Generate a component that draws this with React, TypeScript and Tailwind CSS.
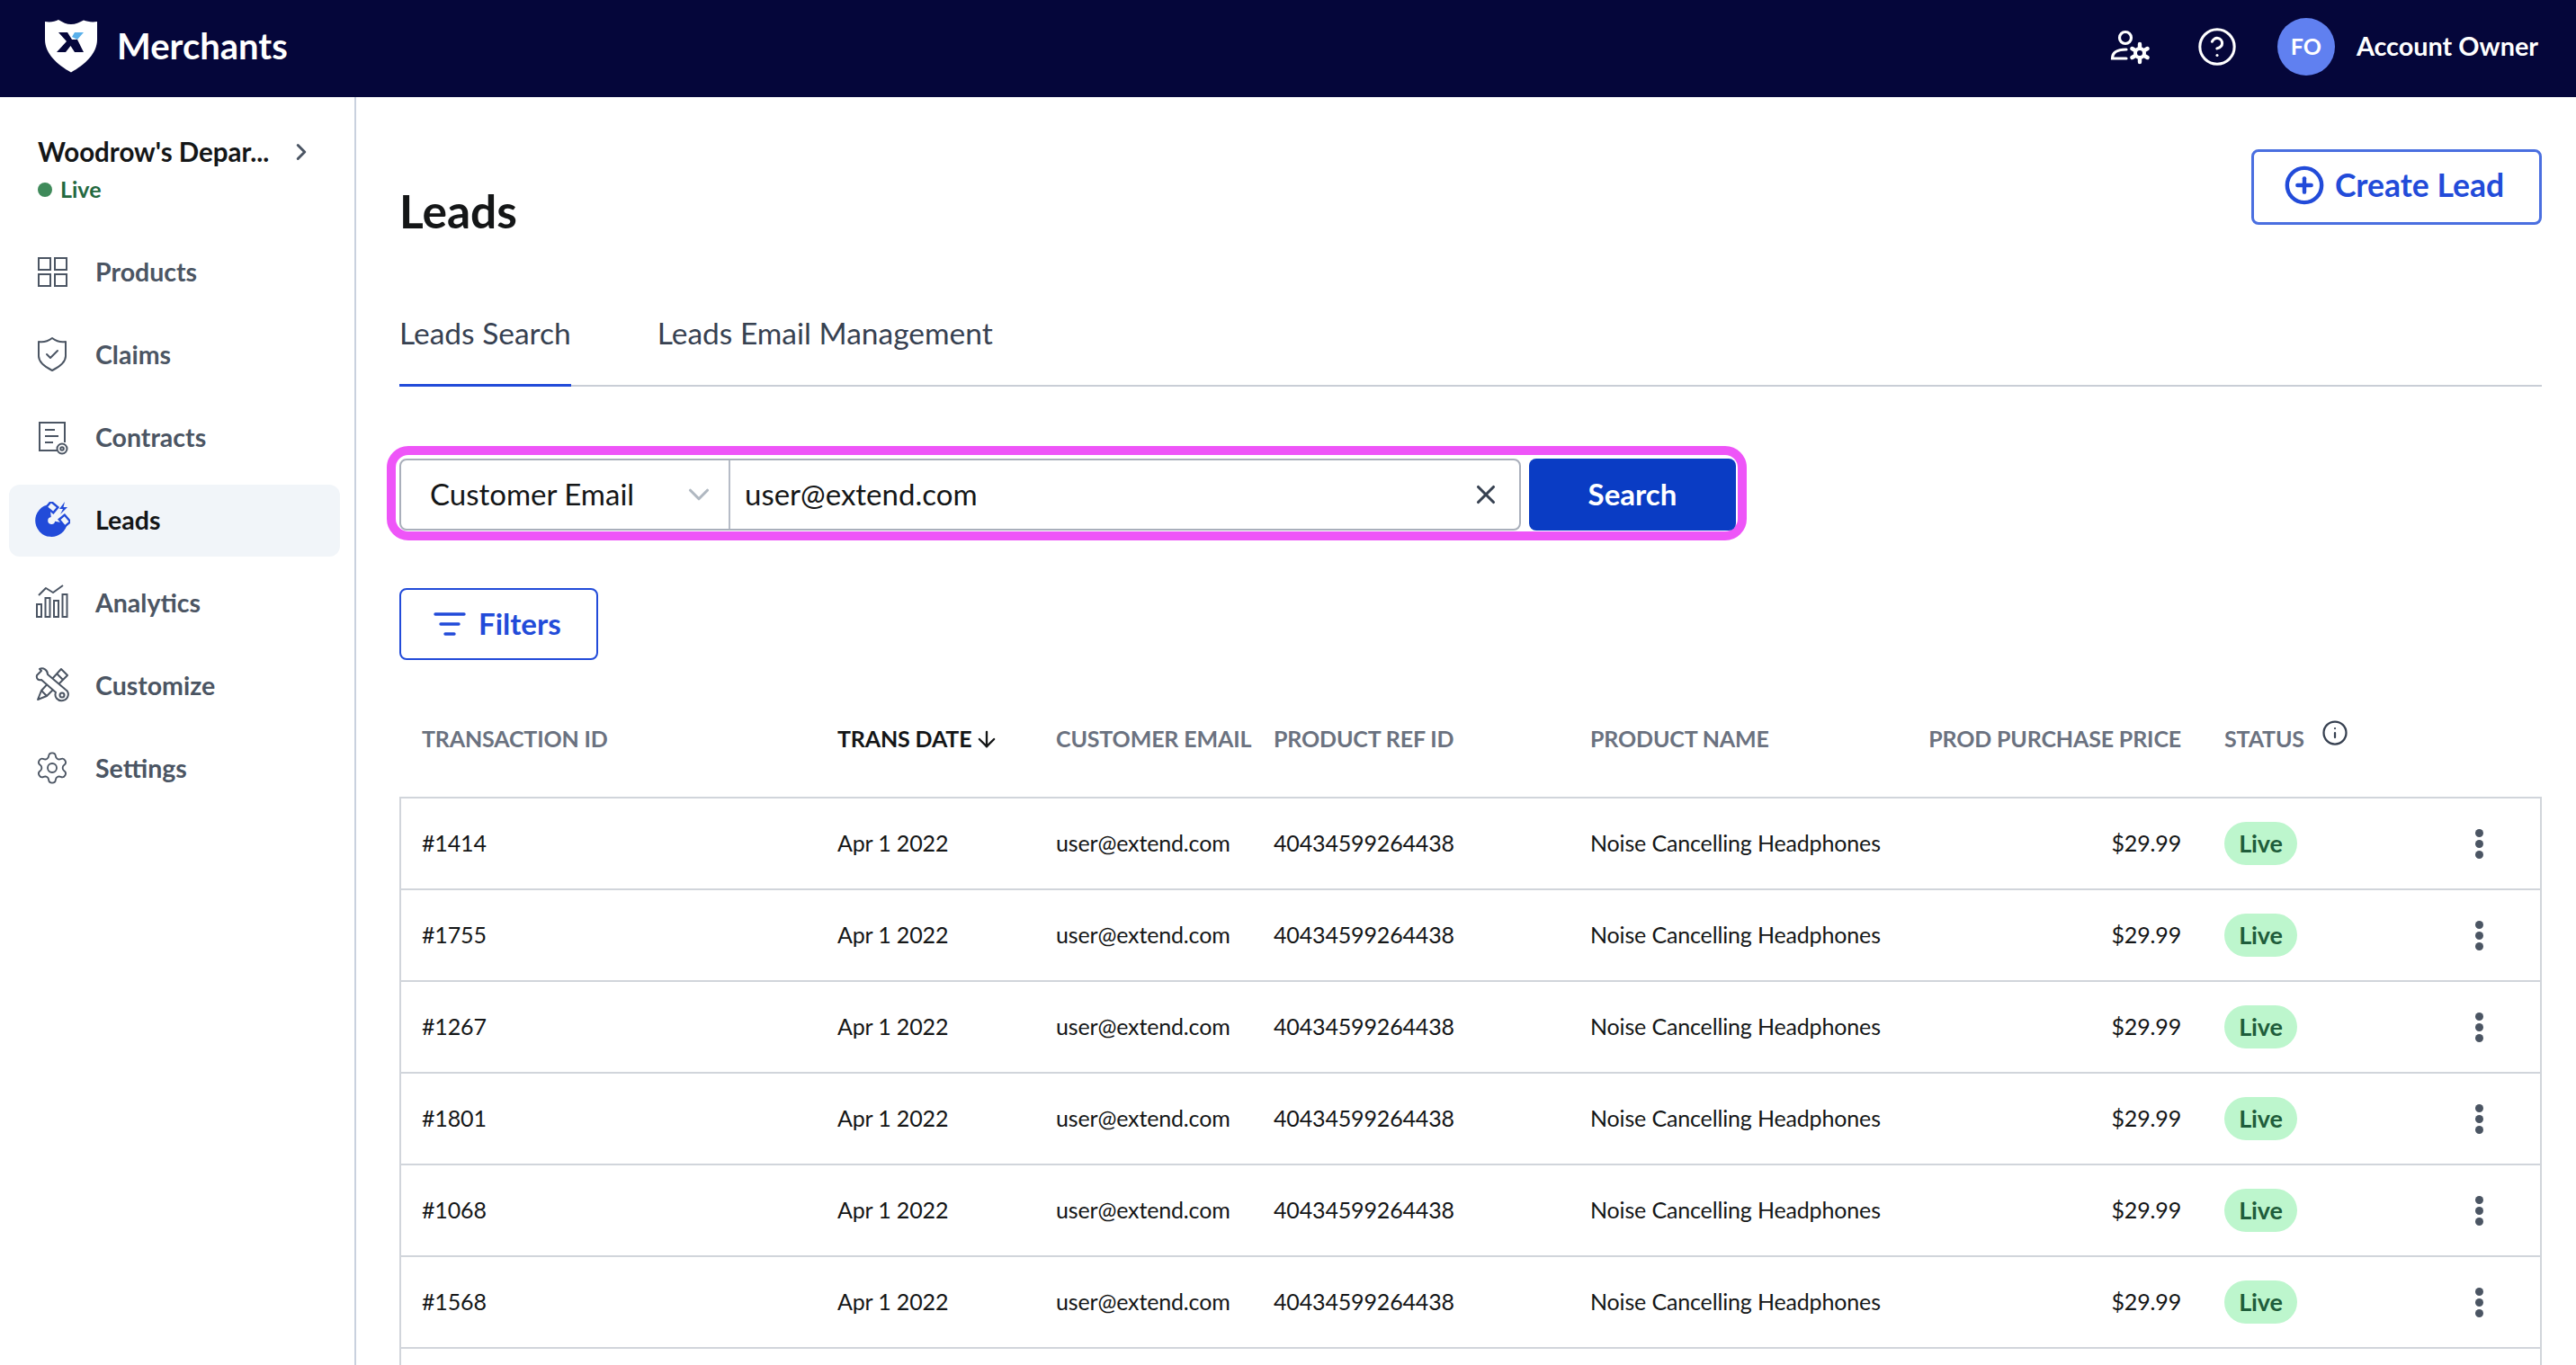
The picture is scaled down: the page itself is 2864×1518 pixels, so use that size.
import { ArrowDown, ChevronDown, ChevronRight, CircleHelp, CirclePlus, Info, Settings, X } from 'lucide-react';

const rowGrid = 'grid grid-cols-[485px_243px_242px_352px_352px_305px_275px_1fr] items-center';

const rows = ['#1414', '#1755', '#1267', '#1801', '#1068', '#1568'];

function Logo() {
  return (
    <svg width="58" height="59" viewBox="0 0 58 59">
      <path d="M0 2 C6 3 11 2 15 0 C20 3 24 5 29 5 C34 5 38 3 43 0.5 C47 2 52 3 58 2 L58 22 C58 38 44 50 29 58.5 C14 50 0 38 0 22 Z" fill="#fff" />
      <path d="M15 14 L25 14 L30 22 L36 22 L43 36 L33 36 L28.5 29 L23 36 L13 36 L24 24 Z" fill="#05063a" />
      <path d="M33 14 L43 14 L36 22 L30 19 Z" fill="#5ab0ea" />
    </svg>
  );
}

function UserCogIcon() {
  return (
    <svg width="44" height="40" viewBox="0 0 44 40" fill="none" stroke="#fff" strokeWidth="3.2" strokeLinecap="round">
      <circle cx="17" cy="10" r="6.5" />
      <path d="M18 23 C9 23 2.5 26 2.5 33 L18 33" />
      <circle cx="33" cy="27" r="5" strokeWidth="4" />
      <path d="M33 17 V20 M33 34 V37 M24.5 22 L27 23.5 M39 30.5 L41.5 32 M24.5 32 L27 30.5 M39 23.5 L41.5 22" strokeWidth="4.4" />
    </svg>
  );
}

function ProductsIcon() {
  return (
    <svg width="40" height="40" viewBox="0 0 40 40" fill="none" stroke="#4b5563" strokeWidth="2">
      <rect x="5" y="5" width="13" height="13" />
      <rect x="23" y="5" width="13" height="13" />
      <rect x="5" y="23" width="13" height="13" />
      <rect x="23" y="23" width="13" height="13" />
    </svg>
  );
}

function ClaimsIcon() {
  return (
    <svg width="40" height="40" viewBox="0 0 40 40" fill="none" stroke="#4b5563" strokeWidth="2" strokeLinejoin="round">
      <path d="M5 6 C10 7 16 5 20 2 C24 5 30 7 35 6 V22 C35 29 28 34 20 38 C12 34 5 29 5 22 Z" />
      <path d="M14 20 L18 24 L26 16" strokeLinecap="round" />
    </svg>
  );
}

function ContractsIcon() {
  return (
    <svg width="40" height="40" viewBox="0 0 40 40" fill="none" stroke="#4b5563" strokeWidth="2">
      <path d="M27 35 H6 V4 H34 V26" />
      <path d="M12 12 H23 M12 19 H27 M12 26 H21" />
      <circle cx="31" cy="33" r="5.5" fill="#fff" />
      <circle cx="31" cy="33" r="1.8" />
    </svg>
  );
}

function MagnetIcon() {
  return (
    <svg width="40" height="40" viewBox="0 0 40 40" fill="none">
      <path d="M18 10 A11 11 0 1 0 30 23" stroke="#224bd9" strokeWidth="14" />
      <rect x="15" y="2" width="10" height="8" transform="rotate(40 20 6)" fill="#f1f5f9" stroke="#224bd9" strokeWidth="2.4" />
      <rect x="29" y="17" width="10" height="8" transform="rotate(50 34 21)" fill="#f1f5f9" stroke="#224bd9" strokeWidth="2.4" />
      <path d="M34 0 L28 8 L32 8 L29 14 L37 6 L32.5 6 Z" fill="#224bd9" />
    </svg>
  );
}

function AnalyticsIcon() {
  return (
    <svg width="40" height="40" viewBox="0 0 40 40" fill="none" stroke="#4b5563" strokeWidth="2">
      <path d="M5 12 L13 4 L21 9 L32 1" strokeLinejoin="round" />
      <rect x="3" y="22" width="5" height="14" />
      <rect x="12.5" y="15" width="5" height="21" />
      <rect x="22" y="18" width="5" height="18" />
      <rect x="31.5" y="11" width="5" height="25" />
    </svg>
  );
}

function CustomizeIcon() {
  return (
    <svg width="40" height="40" viewBox="0 0 40 40" fill="none" stroke="#4b5563" strokeWidth="2" strokeLinejoin="round">
      <path d="M30 2 L37 9 L14 32 L4 36 L8 26 Z" fill="#fff" />
      <path d="M25 7 L32 14 M8 26 L14 32" />
      <path d="M3 9 L8 4 L6 2 C10 0 15 3 15 8 L35 25 C40 28 38 36 32 37 C26 38 22 33 24 28 L8 14 C5 15 2 13 3 9 Z" fill="#fff" />
      <circle cx="31" cy="31" r="2.5" />
    </svg>
  );
}

function NavItem({ icon, label, active }: { icon: React.ReactNode; label: string; active?: boolean }) {
  return (
    <div className={`flex h-[80px] items-center gap-[28px] rounded-xl pb-[2px] pl-[28px] text-[28.5px] font-bold ${active ? 'bg-[#f1f5f9] text-[#141617]' : 'text-[#4b5563]'}`}>
      <span className="flex w-[40px] items-center justify-center">{icon}</span>
      {label}
    </div>
  );
}

function Header() {
  return (
    <header className="flex h-[108px] items-center justify-between bg-[#05063a] pb-[4px] pl-[50px] pr-[42px] text-white">
      <div className="mb-[2px] flex items-center gap-[22px]">
        <Logo />
        <span className="text-[40px] font-bold">Merchants</span>
      </div>
      <div className="flex items-center">
        <UserCogIcon />
        <CircleHelp size={46} strokeWidth={1.6} className="ml-[52px]" />
        <div className="ml-[44px] flex h-[64px] w-[64px] items-center justify-center rounded-full bg-[#6080f0] text-[25px] font-bold">FO</div>
        <span className="ml-[24px] text-[28.8px] font-bold">Account Owner</span>
      </div>
    </header>
  );
}

function Sidebar() {
  return (
    <aside className="w-[396px] shrink-0 border-r-2 border-[#c9d1de] pt-[41px]">
      <div className="flex h-[40px] items-center pl-[42px] text-[29.5px] font-bold text-[#141617]">
        <span className="w-[278px]">Woodrow's Depar...</span>
        <ChevronRight size={30} strokeWidth={2.4} className="text-[#4b5563]" />
      </div>
      <div className="mt-[8px] flex h-[28px] items-center gap-[9px] pl-[42px] text-[25px] font-bold text-[#24693f]">
        <span className="h-[16px] w-[16px] rounded-full bg-[#3f8a5a]" />
        Live
      </div>
      <nav className="ml-[10px] mt-[38px] flex w-[368px] flex-col gap-[12px]">
        <NavItem icon={<ProductsIcon />} label="Products" />
        <NavItem icon={<ClaimsIcon />} label="Claims" />
        <NavItem icon={<ContractsIcon />} label="Contracts" />
        <NavItem icon={<MagnetIcon />} label="Leads" active />
        <NavItem icon={<AnalyticsIcon />} label="Analytics" />
        <NavItem icon={<CustomizeIcon />} label="Customize" />
        <NavItem icon={<Settings size={42} strokeWidth={1.1} className="text-[#4b5563]" />} label="Settings" />
      </nav>
    </aside>
  );
}

function Table() {
  return (
    <div className="w-[2382px] text-[25px] tracking-[-0.15px] text-[#141617]">
      <div className={`${rowGrid} h-[152px] px-[2px] pt-[24px] font-bold text-[#6b7280]`}>
        <span className="pl-[23px]">TRANSACTION ID</span>
        <span className="flex items-center gap-[3px] text-[#141617]">
          TRANS DATE
          <ArrowDown size={28} strokeWidth={2} />
        </span>
        <span>CUSTOMER EMAIL</span>
        <span>PRODUCT REF ID</span>
        <span>PRODUCT NAME</span>
        <span className="whitespace-nowrap text-right">PROD PURCHASE PRICE</span>
        <span className="flex items-center pl-[48px]">
          STATUS
          <Info size={30} strokeWidth={1.8} className="mb-[14px] ml-[19px] text-[#374151]" />
        </span>
      </div>
      {rows.map((id) => (
        <div key={id} className={`${rowGrid} h-[102px] border-x-2 border-t-2 border-[#d1d5db]`}>
          <span className="pl-[23px]">{id}</span>
          <span>Apr 1 2022</span>
          <span>user@extend.com</span>
          <span>40434599264438</span>
          <span>Noise Cancelling Headphones</span>
          <span className="text-right">$29.99</span>
          <span className="pl-[48px]">
            <span className="flex h-[48px] w-[81px] items-center justify-center rounded-3xl bg-[#bdf6cd] text-[27px] font-bold text-[#1f5d3b]">Live</span>
          </span>
          <span className="ml-[52px] flex w-[9px] flex-col gap-[3px]">
            <span className="h-[9px] w-[9px] rounded-full bg-[#4b5563]" />
            <span className="h-[9px] w-[9px] rounded-full bg-[#4b5563]" />
            <span className="h-[9px] w-[9px] rounded-full bg-[#4b5563]" />
          </span>
        </div>
      ))}
      <div className="h-[102px] border-x-2 border-t-2 border-[#d1d5db]" />
    </div>
  );
}

export default function App() {
  return (
    <div className="h-[1518px] overflow-hidden bg-white font-['Lato','Liberation_Sans',sans-serif]">
      <Header />
      <div className="flex">
        <Sidebar />
        <main className="flex-1 pl-[48px] pr-[39px] pt-[58px]">
          {/* Title */}
          <div className="flex items-start justify-between">
            <h1 className="mt-[40px] text-[51.5px] font-bold leading-[56px] text-[#141617]">Leads</h1>
            <button className="flex h-[84px] w-[323px] items-center justify-center gap-[11px] rounded-lg border-[3px] border-[#4a6fe0] pb-[4px] pr-[6px] text-[35.5px] font-bold text-[#224bd9]">
              <CirclePlus size={46} strokeWidth={2.3} />
              Create Lead
            </button>
          </div>

          {/* Tabs */}
          <div className="mt-[84px] flex h-[84px] gap-[96px] border-b-2 border-[#c9ced6] text-[33.5px] text-[#374151]">
            <div className="-mb-[2px] flex items-center border-b-[3px] border-[#224bd9] pb-[33px]">Leads Search</div>
            <div className="flex items-center pb-[33px]">Leads Email Management</div>
          </div>

          {/* Search */}
          <div className="-ml-[14px] mt-[66px] flex h-[105px] w-[1512px] gap-[9px] rounded-[24px] border-[10px] border-[#ee55f8] pb-[1px] pl-[4px] pr-[2px] pt-[4px] text-[33px]">
            <div className="flex flex-1 rounded-lg border-2 border-[#a9afbb] text-[#141617]">
              <div className="flex w-[366px] items-center justify-between border-r-2 border-[#b6bcc7] pl-[32px] pr-[14px]">
                Customer Email
                <ChevronDown size={38} strokeWidth={2} className="text-[#b0b8c1]" />
              </div>
              <div className="flex flex-1 items-center justify-between pl-[16px] pr-[20px]">
                user@extend.com
                <X size={34} strokeWidth={2.2} className="text-[#374151]" />
              </div>
            </div>
            <button className="w-[230px] rounded-lg bg-[#0a3cc4] font-bold text-white">Search</button>
          </div>

          {/* Filters */}
          <button className="mt-[53px] flex h-[80px] w-[221px] items-center gap-[14px] rounded-lg border-2 border-[#224bd9] pl-[36px] text-[33px] font-bold text-[#224bd9]">
            <svg width="36" height="28" viewBox="0 0 36 28" stroke="#224bd9" strokeWidth="3.4" strokeLinecap="round">
              <path d="M2 3 H34 M8 14 H28 M13 25 H23" />
            </svg>
            Filters
          </button>

          <Table />
        </main>
      </div>
    </div>
  );
}
